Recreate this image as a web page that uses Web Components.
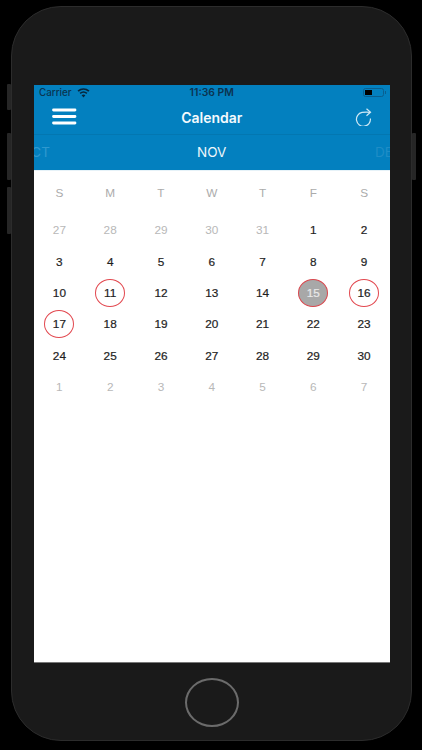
<!DOCTYPE html>
<html><head><meta charset="utf-8">
<style>
html,body{margin:0;padding:0;background:#000;width:422px;height:750px;overflow:hidden;font-family:"Inter","Liberation Sans",sans-serif}
</style></head><body>
<phone-frame>
  <status-bar></status-bar>
  <nav-bar title="Calendar"></nav-bar>
  <month-strip prev="OCT" current="NOV" next="DEC"></month-strip>
  <calendar-grid></calendar-grid>
</phone-frame>
<script>
function def(name, html, init){
  customElements.define(name, class extends HTMLElement{
    connectedCallback(){
      if(this.shadowRoot) return;
      const r=this.attachShadow({mode:'open'});
      r.innerHTML=typeof html==='function'?html(this):html;
      if(init) init(r,this);
    }
  });
}
def('phone-frame',`<style>
:host{display:block;box-sizing:border-box;width:422px;height:750px;padding:6px 10px 9px 11px}
.body{position:relative;box-sizing:border-box;width:401px;height:735px;background:#1a1a1a;border-radius:50px;border:1px solid #2c2c2c;padding:77.5px 22.5px 0 22px;display:flex;flex-direction:column;align-items:stretch}
.screen{width:355.5px;height:578px;background:#fff;display:flex;flex-direction:column;border-bottom:1px solid #777;box-sizing:border-box;flex:none}
.home{flex:none;box-sizing:border-box;width:54px;height:49px;margin:15px auto 0;border:2px solid #6b6b6b;border-radius:50%;position:relative;left:.5px}
.btn{position:absolute;width:4px;background:#262626;border-radius:1px}
.l{left:-5px}.r{right:-5px}
</style>
<div class="body">
  <span class="btn l" style="top:77px;height:26px"></span>
  <span class="btn l" style="top:126px;height:47px"></span>
  <span class="btn l" style="top:180px;height:47px"></span>
  <span class="btn r" style="top:126px;height:47px"></span>
  <div class="screen"><slot></slot></div>
  <div class="home"></div>
</div>`);
def('status-bar',`<style>
:host{display:flex;align-items:center;justify-content:space-between;height:16px;background:#0380bf;color:#0a3450;font:500 9.5px "Inter","Liberation Sans",sans-serif;padding:0 4px 0 5px;position:relative;flex:none;box-sizing:border-box}
.left{display:flex;align-items:center;gap:5px;font-weight:500;font-size:9.8px}
.time{position:absolute;left:0;right:0;text-align:center;font-weight:600;font-size:10.4px;color:#0b3350}
.bat{display:flex;align-items:center}
.b{box-sizing:border-box;width:21px;height:9px;border:1px solid #0a5f8f;border-radius:2.5px;padding:1px;display:block}
.b i{display:block;width:7px;height:100%;background:#000}
.t{width:1px;height:3px;background:#0a5f8f;margin-left:.5px}
</style>
<div class="left"><span>Carrier</span>
<svg width="13" height="10" viewBox="0 0 13 10"><path d="M6.5 9.5 4.6 7.2a3 3 0 0 1 3.8 0zM3.6 6 2.6 4.8a6.1 6.1 0 0 1 7.8 0L9.4 6a4.6 4.6 0 0 0-5.8 0zM1.7 3.7.5 2.4a9.3 9.3 0 0 1 12 0l-1.2 1.3a7.6 7.6 0 0 0-9.6 0z" fill="#07263c"/></svg></div>
<span class="time">11:36 PM</span>
<span class="bat"><span class="b"><i></i></span><span class="t"></span></span>`);
def('nav-bar',t=>`<style>
:host{display:flex;align-items:center;justify-content:space-between;height:34.5px;background:#0380bf;border-bottom:1px solid #0377b1;padding:0 16px 1px 18px;position:relative;flex:none;box-sizing:border-box}
.title{position:absolute;left:0;right:0;text-align:center;color:#f4fafd;font:600 14px "Inter","Liberation Sans",sans-serif;top:8.5px}
svg{display:block;position:relative}
</style>
<svg width="25" height="17" viewBox="0 0 25 17"><g stroke="#fff" stroke-width="2.8" stroke-linecap="round"><path d="M1.5 2h21.5M1.5 8.5h21.5M1.5 15h21.5"/></g></svg>
<span class="title">${t.getAttribute('title')}</span>
<svg width="19" height="19" viewBox="0 0 19 19" fill="none" stroke="#cfe8f5" stroke-width="1.2"><path d="M15.2 5.3C12 5.1 9.5 5.1 7 5.4A7 7 0 1 0 15.4 11.5"/><path d="M11.5 1.8 15.5 5.3 11.5 8.8"/></svg>`);
def('month-strip',t=>`<style>
:host{display:grid;grid-template-columns:1fr;height:36px;background:#0380bf;position:relative;overflow:hidden;flex:none;box-sizing:border-box;border-bottom:1px solid #e6f2f8;font:400 13.5px "Inter","Liberation Sans",sans-serif}
.c{color:#eef7fb;text-align:center;line-height:34px}
.s{position:absolute;top:0;line-height:34px}
.p{left:-13px;color:#2f99cf}.n{left:341px;color:#1f8dc6;white-space:nowrap}
</style>
<span class="s p">${t.getAttribute('prev')}</span><span class="c">${t.getAttribute('current')}</span><span class="s n">${t.getAttribute('next')}</span>`);
def('day-cell',t=>`<style>
:host{display:flex;align-items:center;justify-content:center;height:31.45px;font:400 11.8px "Liberation Sans",Arial,sans-serif;color:#1e1e1e;-webkit-text-stroke:.2px currentColor}
:host([kind~=muted]){color:#b8b8b8;-webkit-text-stroke:0}
:host([kind~=head]){color:#ababab;font-size:11.8px;-webkit-text-stroke:0}
span{display:flex;align-items:center;justify-content:center;box-sizing:border-box;width:30px;height:28px;border-radius:50%}
:host([kind~=mark]) span{border:1.5px solid #e2484f}
:host([kind~=sel]) span{background:#a8a8a8;color:#e9e9e9;border:1.7px solid #d9474d}
</style><span><slot></slot></span>`);
def('calendar-grid',`<style>
:host{display:grid;grid-template-columns:repeat(7,1fr);padding:6px 0 0;flex:1;align-content:start;background:transparent;opacity:.999}
</style><slot></slot>`);
const grid=document.querySelector('calendar-grid');
const add=(v,k)=>{const d=document.createElement('day-cell');d.textContent=v;if(k)d.setAttribute('kind',k);grid.appendChild(d);};
['S','M','T','W','T','F','S'].forEach(x=>add(x,'head'));
const spacer=document.createElement('div');spacer.style.cssText='grid-column:1/-1;height:6px';grid.appendChild(spacer);
[27,28,29,30,31].forEach(x=>add(x,'muted'));
for(let i=1;i<=30;i++){add(i,i==15?'sel':[11,16,17].includes(i)?'mark':'');}
for(let i=1;i<=7;i++)add(i,'muted');
</script>
</body></html>
